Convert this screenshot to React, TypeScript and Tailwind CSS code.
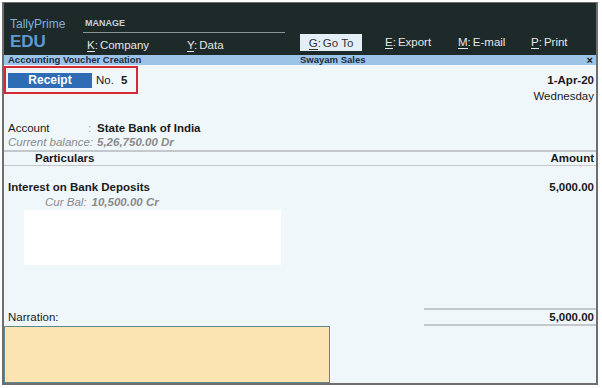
import React from "react";

const U = ({ k, rest, dark }: { k: string; rest: string; dark?: boolean }) => (
  <span className="whitespace-nowrap">
    <span className={`border-b ${dark ? "border-[#333]" : "border-[#e8e8e8]"}`}>{k}</span>
    <span>:</span>
    <span className="ml-[2px]">{rest}</span>
  </span>
);

export default function App() {
  return (
    <div
      className="w-[602px] h-[388px] bg-white overflow-hidden"
      style={{ fontFamily: '"Liberation Sans", Arial, sans-serif' }}
    >
      <div className="ml-[2px] mt-[2px] w-[596px] h-[383px] border-l-2 border-t border-r-2 border-b-2 border-[#6e6e6e] flex flex-col bg-[#f0f7fb] overflow-hidden">
        {/* Header */}
        <div className="h-[52px] bg-[#1e2a2a] flex text-[#e6e6e6] shrink-0">
          <div className="w-[79px] pl-[6px] pt-[14px] flex flex-col">
            <span className="text-[12px] leading-[14px] text-[#7fb0da]">TallyPrime</span>
            <span className="text-[17px] leading-[20px] font-bold text-[#5e9bd4] mt-px">EDU</span>
          </div>
          <div className="w-[202px] flex flex-col">
            <div className="pt-[15px] text-[9px] leading-[11px] font-bold text-[#c8d0d8] pl-[2px]">MANAGE</div>
            <div className="mt-[3px] h-px bg-[#8c9494]" />
            <div className="flex mt-[5px] text-[11.5px] leading-[14px]">
              <span className="pl-[4px] w-[104px]">
                <U k="K" rest="Company" />
              </span>
              <span>
                <U k="Y" rest="Data" />
              </span>
            </div>
          </div>
          <div className="ml-[15px] flex items-start pt-[32px] text-[11.5px] leading-[14px]">
            <div className="w-[62px] h-[17px] -mt-[1px] bg-[#e4eef6] text-[#333] flex items-center justify-center">
              <U k="G" rest="Go To" dark />
            </div>
            <span className="ml-[23px] w-[73px]">
              <U k="E" rest="Export" />
            </span>
            <span className="w-[73px]">
              <U k="M" rest="E-mail" />
            </span>
            <span>
              <U k="P" rest="Print" />
            </span>
          </div>
        </div>
        {/* Title bar */}
        <div className="h-[10px] bg-[#9cc4e6] flex items-center text-[9.5px] leading-[10px] font-bold text-[#1b2c44] shrink-0">
          <span className="pl-[4px] w-[296px]">Accounting Voucher Creation</span>
          <span className="flex-1">Swayam Sales</span>
          <span className="pr-[3px] text-[11px] text-[#111]">×</span>
        </div>
        {/* Body */}
        <div className="flex-1 flex flex-col text-[11.5px] leading-[14px] text-[#1a1a1a]">
          <div className="flex justify-between">
            <div className="mt-px w-[134px] h-[28px] border-2 border-[#d42a32] flex items-center pl-[2px]">
              <div className="w-[84px] h-[15px] bg-[#2f6cb6] text-white font-bold text-[12px] flex items-center justify-center">
                Receipt
              </div>
              <span className="ml-[4px]">No.</span>
              <span className="ml-[7px] font-bold">5</span>
            </div>
            <div className="flex flex-col items-end pr-[2px] pt-[8px]">
              <span className="font-bold">1-Apr-20</span>
              <span className="mt-[2px]">Wednesday</span>
            </div>
          </div>
          <div className="mt-[18px] pl-[4px] flex">
            <span className="w-[80px]">Account</span>
            <span className="text-[#999] w-[9px]">:</span>
            <span className="font-bold">State Bank of India</span>
          </div>
          <div className="pl-[4px] italic text-[#8a8a8a] flex whitespace-nowrap">
            <span>Current balance:</span>
            <span className="font-bold ml-[4px]">5,26,750.00 Dr</span>
          </div>
          <div className="mt-px border-t-2 border-[#c4c8cc] flex justify-between font-bold leading-[13px]">
            <span className="pl-[31px]">Particulars</span>
            <span className="pr-[2px]">Amount</span>
          </div>
          <div className="h-px bg-[#c4c8cc]" />
          <div className="mt-[14px] pl-[4px] flex justify-between font-bold">
            <span>Interest on Bank Deposits</span>
            <span className="pr-[2px]">5,000.00</span>
          </div>
          <div className="pl-[41px] italic text-[#8a8a8a] flex mt-px whitespace-nowrap">
            <span>Cur Bal:</span>
            <span className="font-bold ml-[5px]">10,500.00 Cr</span>
          </div>
          <div className="ml-[20px] mt-px w-[257px] h-[55px] bg-white" />
          <div className="mt-[43px] flex justify-between items-end">
            <span className="pl-[4px] pb-[2px]">Narration:</span>
            <div className="w-[172px] border-t-2 border-b-2 border-[#c4c8cc] text-right font-bold pr-[2px]">
              5,000.00
            </div>
          </div>
          <div className="w-[326px] flex-1 bg-[#fce4b2] border border-[#5c8a8c]" />
        </div>
      </div>
    </div>
  );
}
